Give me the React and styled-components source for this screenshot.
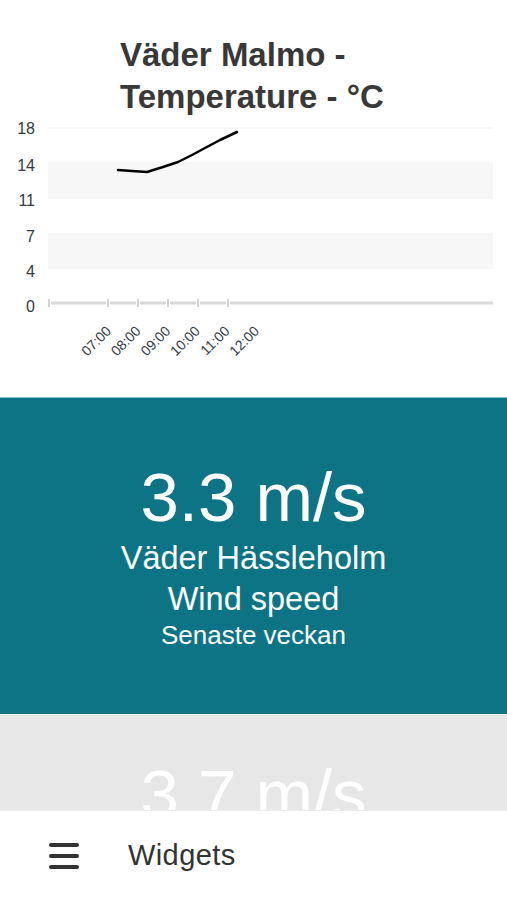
import styled, { createGlobalStyle } from 'styled-components';

const GlobalStyle = createGlobalStyle`
  html, body {
    margin: 0;
    padding: 0;
    background: #fff;
    font-family: "Liberation Sans", Arial, sans-serif;
  }
`;

const Page = styled.div`
  height: 100vh;
  display: flex;
  flex-direction: column;
  overflow: hidden;
`;

const Feed = styled.div`
  flex: 1;
  overflow: hidden;
  display: flex;
  flex-direction: column;
`;

const ChartCard = styled.section`
  padding-top: 34px;
  background: #fff;
`;

const ChartTitle = styled.h2`
  margin: 0;
  padding-left: 120px;
  font-size: 33px;
  line-height: 42px;
  font-weight: 700;
  color: #383838;
`;

const ChartSvg = styled.svg`
  display: block;
`;

const StatCard = styled.section`
  flex-shrink: 0;
  height: ${(p) => p.$height}px;
  box-sizing: border-box;
  background: ${(p) => p.$bg};
  border-top: 1px solid ${(p) => p.$edge};
  display: flex;
  flex-direction: column;
  align-items: center;
  justify-content: ${(p) => (p.$top ? 'flex-start' : 'center')};
  padding-top: ${(p) => p.$top || 0}px;
  color: #fff;
  text-align: center;
`;

const Value = styled.div`
  font-size: 69px;
  line-height: 70px;
`;

const Label = styled.div`
  font-size: 32.5px;
  line-height: 41px;
  margin-top: ${(p) => p.$gap || 0}px;
`;

const Period = styled.div`
  font-size: 26px;
  line-height: 30px;
`;

const BottomBar = styled.nav`
  height: 90px;
  flex-shrink: 0;
  box-sizing: border-box;
  border-top: 1px solid #ececec;
  background: #fff;
  display: flex;
  align-items: center;
  padding-left: 49px;
  gap: 49px;
`;

const MenuButton = styled.button`
  border: 0;
  padding: 0;
  background: none;
  display: flex;
  color: #333;
`;

const BarTitle = styled.span`
  font-size: 29px;
  color: #333;
  letter-spacing: 0.4px;
`;

const yTicks = [
  { label: '18', y: 10 },
  { label: '14', y: 47 },
  { label: '11', y: 82 },
  { label: '7', y: 118 },
  { label: '4', y: 153 },
  { label: '0', y: 188 },
];

const hours = ['07:00', '08:00', '09:00', '10:00', '11:00', '12:00'];
const axisTicks = [49, 108, 138, 168, 198, 228];

const temps = [
  [118, 52], [132, 53], [147, 54], [163, 49], [178, 44],
  [192, 37], [205, 30], [220, 22], [237, 14],
];

function TemperatureChart() {
  return (
    <ChartSvg width="507" height="279" viewBox="0 0 507 279">
      <line x1="48" y1="10" x2="493" y2="10" stroke="#f0f0f0" strokeWidth="1" />
      <rect x="48" y="44" width="445" height="37" fill="#f7f7f7" />
      <rect x="48" y="115" width="445" height="36" fill="#f7f7f7" />
      <line x1="48" y1="185" x2="493" y2="185" stroke="#d9d9d9" strokeWidth="3" />
      {axisTicks.map((x) => (
        <g key={x}>
          <line x1={x - 2} y1="185" x2={x + 2} y2="185" stroke="#fff" strokeWidth="4" />
          <line x1={x} y1="181" x2={x} y2="189" stroke="#c4c4c4" strokeWidth="1.5" />
        </g>
      ))}
      {yTicks.map((t) => (
        <text
          key={t.label}
          x="35"
          y={t.y + 6}
          textAnchor="end"
          fontSize="16"
          fill="#333a44"
          fontFamily="Liberation Sans, Arial, sans-serif"
        >
          {t.label}
        </text>
      ))}
      {hours.map((h, i) => {
        const x = 112 + i * 29.6;
        return (
          <text
            key={h}
            x={x}
            y="214"
            textAnchor="end"
            fontSize="14"
            fill="#333a44"
            fontFamily="Liberation Sans, Arial, sans-serif"
            transform={`rotate(-45 ${x} 214)`}
          >
            {h}
          </text>
        );
      })}
      <polyline
        points={temps.map((p) => p.join(',')).join(' ')}
        fill="none"
        stroke="#000"
        strokeWidth="2.5"
        strokeLinejoin="round"
        strokeLinecap="round"
      />
    </ChartSvg>
  );
}

export default function App() {
  return (
    <Page>
      <GlobalStyle />
      <Feed>
        <ChartCard>
          <ChartTitle>
            Väder Malmo -<br />
            Temperature - °C
          </ChartTitle>
          <TemperatureChart />
        </ChartCard>
        <StatCard $height={317} $bg="#0c7485" $edge="#86c3cb">
          <Value>3.3 m/s</Value>
          <Label $gap={5}>Väder Hässleholm</Label>
          <Label>Wind speed</Label>
          <Period>Senaste veckan</Period>
        </StatCard>
        <StatCard $height={317} $bg="#e8e7e8" $edge="#f2f2f2" $top={45}>
          <Value>3.7 m/s</Value>
        </StatCard>
      </Feed>
      <BottomBar>
        <MenuButton aria-label="Meny">
          <svg width="30" height="26" viewBox="0 0 30 26">
            <g stroke="currentColor" strokeWidth="4" strokeLinecap="round">
              <line x1="2" y1="2" x2="28" y2="2" />
              <line x1="2" y1="13" x2="28" y2="13" />
              <line x1="2" y1="24" x2="28" y2="24" />
            </g>
          </svg>
        </MenuButton>
        <BarTitle>Widgets</BarTitle>
      </BottomBar>
    </Page>
  );
}
